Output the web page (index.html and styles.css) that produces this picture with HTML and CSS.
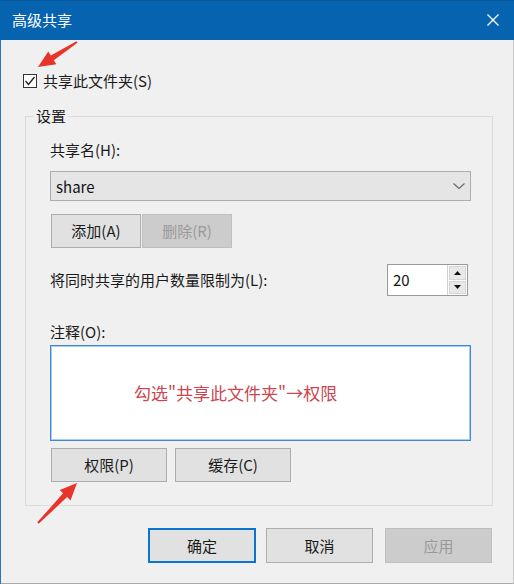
FILE: index.html
```html
<!DOCTYPE html>
<html lang="zh-CN">
<head>
<meta charset="utf-8">
<title>高级共享</title>
<link rel="stylesheet" href="styles.css">
</head>
<body>
<div class="window">
  <div class="titlebar">
    <span class="title">高级共享</span>
    <svg class="close" width="12" height="12" viewBox="0 0 12 12"><path d="M0.5 0.5 L11.5 11.5 M11.5 0.5 L0.5 11.5" stroke="#fff" stroke-width="1.3" fill="none"/></svg>
  </div>
  <div class="content">
    <div class="check-row">
      <span class="checkbox"><svg width="12" height="12" viewBox="0 0 12 12"><path d="M1.5 6 L4.5 9.5 L10.5 2" stroke="#222" stroke-width="1.4" fill="none"/></svg></span>
      <span class="check-text">共享此文件夹(S)</span>
    </div>
    <div class="group">
      <div class="group-label">设置</div>
      <div class="field-label first">共享名(H):</div>
      <div class="combo">
        <span class="combo-text">share</span>
        <svg class="chevron" width="12" height="6" viewBox="0 0 12 6"><path d="M0.5 0.5 L6 5.5 L11.5 0.5" stroke="#666" stroke-width="1.1" fill="none"/></svg>
      </div>
      <div class="btn-row">
        <span class="btn small">添加(A)</span>
        <span class="btn small disabled">删除(R)</span>
      </div>
      <div class="limit-row">
        <span class="field-text">将同时共享的用户数量限制为(L):</span>
        <div class="spinner">
          <span class="spin-value">20</span>
          <div class="spin-btns">
            <span class="spin-btn"><svg width="7" height="4" viewBox="0 0 7 4"><path d="M0 4 L3.5 0 L7 4 Z" fill="#111"/></svg></span>
            <span class="spin-btn"><svg width="7" height="4" viewBox="0 0 7 4"><path d="M0 0 L3.5 4 L7 0 Z" fill="#111"/></svg></span>
          </div>
        </div>
      </div>
      <div class="field-label comment">注释(O):</div>
      <div class="textarea"><span class="note">勾选"共享此文件夹"→权限</span></div>
      <div class="btn-row two">
        <span class="btn mid">权限(P)</span>
        <span class="btn mid">缓存(C)</span>
      </div>
    </div>
    <div class="footer">
      <span class="btn big default">确定</span>
      <span class="btn big">取消</span>
      <span class="btn big disabled apply">应用</span>
    </div>
  </div>
  <svg class="annot" width="514" height="584" viewBox="0 0 514 584">
    <polygon fill="#e8352c" points="77.54,42.84 53.82,60.18 56.36,64.14 38,67 48.26,51.5 50.8,55.46 76.46,41.16"/>
    <polygon fill="#e8352c" points="38.72,523.7 67.13,497.12 70.5,500.4 77,483 59.76,489.94 63.13,493.22 37.28,522.3"/>
  </svg>
</div>
</body>
</html>
```
FILE: styles.css
```css
* { box-sizing: border-box; }
html, body { margin: 0; padding: 0; }
body {
  width: 514px;
  height: 584px;
  overflow: hidden;
  background: #f0f0f0;
  font-family: "Noto Sans CJK SC", "Noto Sans", sans-serif;
  font-size: 15px;
  color: #1a1a1a;
}
.window {
  position: relative;
  width: 514px;
  height: 584px;
  background: #f0f0f0;
  box-shadow: inset 1px 0 0 #2a74bd, inset -1px 0 0 #c8c8c8, inset 0 -1px 0 #a9a9a9;
}
.titlebar {
  height: 40px;
  background: #0563b0;
  display: flex;
  align-items: center;
  justify-content: space-between;
  padding: 0 15px 0 12px;
  color: #fff;
  box-shadow: inset 0 1px 0 #0a5596;
}
.title { font-size: 15px; line-height: 18px; }
.close { display: block; }
.content { padding-top: 32px; }
.check-row {
  display: flex;
  align-items: center;
  padding-left: 23px;
  height: 18px;
  line-height: 18px;
}
.checkbox {
  width: 14px;
  height: 14px;
  border: 1px solid #333;
  background: #fff;
  display: flex;
  align-items: center;
  justify-content: center;
  margin-right: 6px;
}
.checkbox svg { display: block; }
.group {
  margin: 26px 0 0 25px;
  width: 468px;
  border: 1px solid #dcdcdc;
  padding: 0 21px 23px 24px;
}
.group-label {
  margin: -10px 0 0 -16px;
  width: fit-content;
  padding: 0 2px;
  background: #f0f0f0;
  line-height: 18px;
  height: 18px;
}
.field-label { line-height: 18px; height: 18px; }
.field-label.first { margin-top: 16px; }
.field-label.comment { margin-top: 27px; }
.combo {
  margin-top: 12px;
  height: 30px;
  background: #e5e5e5;
  border: 1px solid #adadad;
  display: flex;
  align-items: center;
  justify-content: space-between;
  padding: 0 5px 0 5px;
  color: #111;
}
.chevron { display: block; }
.btn-row { display: flex; margin: 13px 0 0 1px; }
.btn-row.two { margin-top: 7px; gap: 8px; }
.btn {
  display: flex;
  align-items: center;
  justify-content: center;
  height: 34px;
  background: #e1e1e1;
  border: 1px solid #adadad;
  color: #1a1a1a;
  line-height: 18px;
}
.btn.small { width: 90px; }
.btn.small + .btn.small { margin-left: 1px; }
.btn.mid { width: 116px; }
.btn.disabled {
  background: #cccccc;
  border-color: #bfbfbf;
  color: #9a9a9a;
}
.limit-row {
  margin-top: 16px;
  display: flex;
  align-items: center;
  justify-content: space-between;
  line-height: 18px;
}
.spinner {
  width: 81px;
  height: 32px;
  margin-right: 3px;
  display: flex;
  border: 1px solid #9a9a9a;
  background: #fff;
}
.spin-value {
  flex: 1;
  display: flex;
  align-items: center;
  padding-left: 5px;
  color: #111;
}
.spin-btns {
  width: 20px;
  display: flex;
  flex-direction: column;
  gap: 1px;
  padding: 1px;
  background: #fff;
  border-left: 1px solid #d0d0d0;
}
.spin-btn {
  flex: 1;
  background: #e8e8e8;
  border: 1px solid #d6d6d6;
  display: flex;
  align-items: center;
  justify-content: center;
}
.spin-btn svg { display: block; }
.textarea {
  margin-top: 4px;
  height: 96px;
  background: #fff;
  border: 1px solid #3c8ad3;
  box-shadow: inset 0 0 0 1px #a9ccef;
  display: flex;
  align-items: center;
  padding-left: 83px;
}
.note {
  color: #cc4650;
  font-size: 17px;
  line-height: 20px;
}
.footer {
  display: flex;
  justify-content: flex-end;
  gap: 10px;
  margin-top: 22px;
  padding-right: 22px;
}
.btn.big { width: 107px; height: 35px; }
.btn.default {
  width: 108px;
  border: 2px solid #0a74cf;
}
.btn.apply { margin-left: 2px; }
.annot {
  position: absolute;
  left: 0;
  top: 0;
  pointer-events: none;
}
```
